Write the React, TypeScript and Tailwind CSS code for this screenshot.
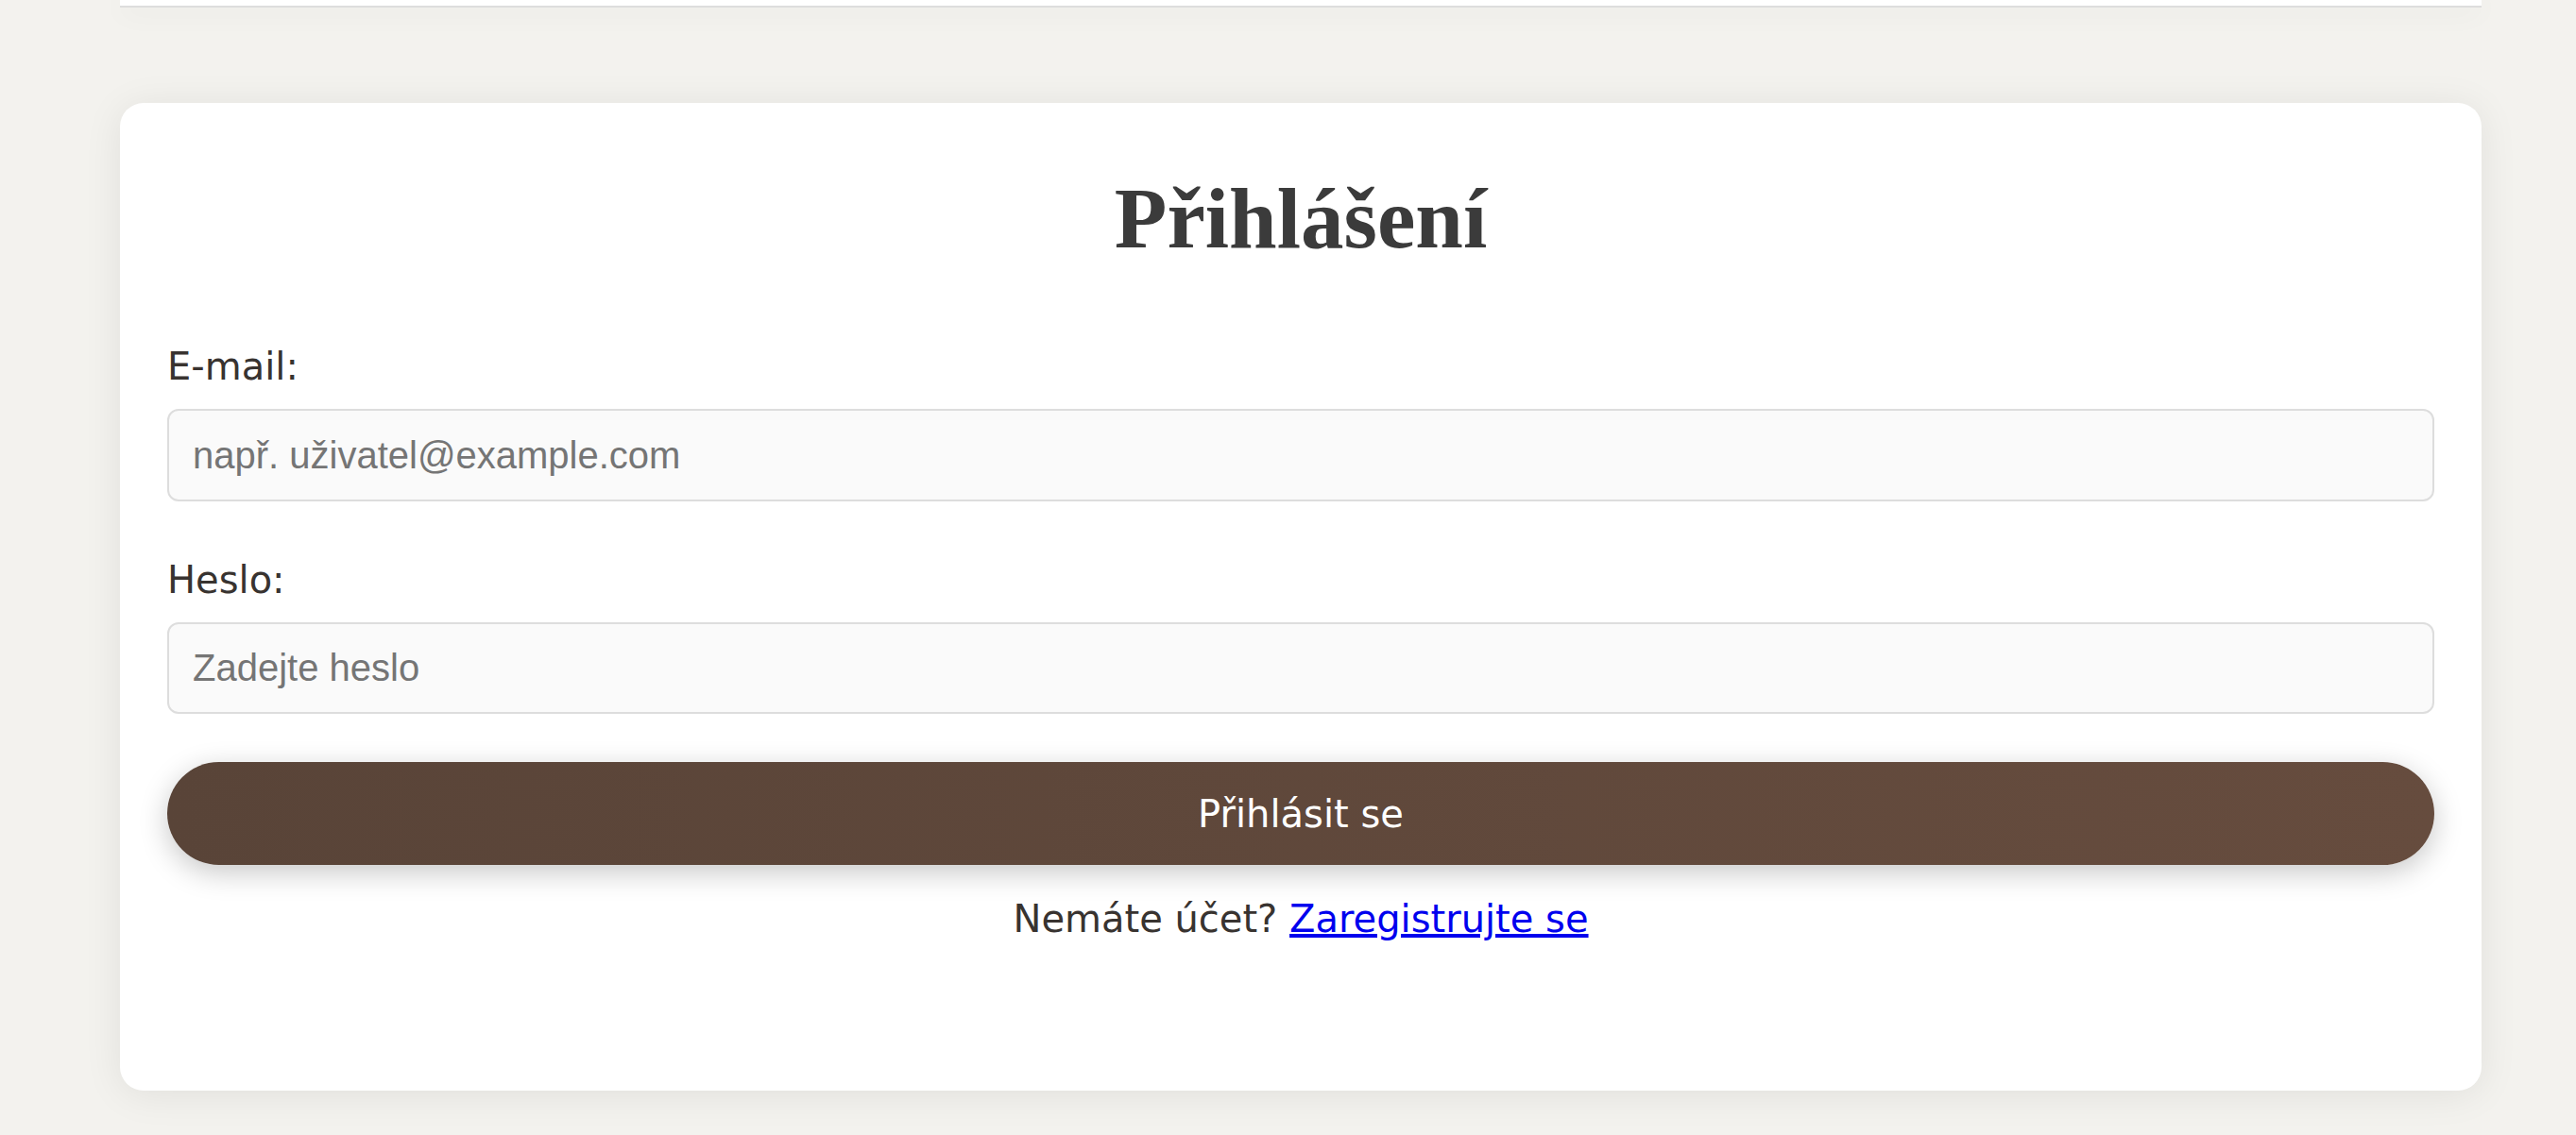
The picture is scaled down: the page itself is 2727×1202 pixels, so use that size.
import { useState } from "react";

const sans = "font-['DejaVu_Sans',sans-serif]";

export default function App() {
  const [email, setEmail] = useState("");
  const [password, setPassword] = useState("");

  return (
    <div className="min-h-screen bg-[#f3f2ee] pl-[127px] pr-[100px]">
      {/* bottom of the header card above */}
      <div className="h-[8px] w-[2500px] bg-white border-b-2 border-[#dddddd] shadow-[0_4px_30px_rgba(0,0,0,0.07)]" />

      <main className="mt-[101px] w-[2500px] rounded-[25px] bg-white px-[50px] pt-[77px] pb-[158px] shadow-[0_4px_40px_rgba(0,0,0,0.08)]">
        <h2 className="text-center font-['Liberation_Serif',serif] text-[91px] font-bold leading-none text-[#3b3b3b]">
          Přihlášení
        </h2>

        <form className="mt-[87px]" onSubmit={(e) => e.preventDefault()}>
          <div className="mb-[59px]">
            <label
              htmlFor="email"
              className={`block ${sans} mb-[21px] text-[40px] leading-[48px] text-[#383330]`}
            >
              E-mail:
            </label>
            <input
              id="email"
              type="email"
              value={email}
              onChange={(e) => setEmail(e.target.value)}
              placeholder="např. uživatel@example.com"
              className="block h-[98px] w-full rounded-[12px] border-2 border-[#dddddd] bg-[#fafafa] pl-[25px] font-['Liberation_Sans',Arial,sans-serif] text-[40px] text-[#333333] outline-none placeholder:text-[#757575]"
            />
          </div>

          <div className="mb-[51px]">
            <label
              htmlFor="password"
              className={`block ${sans} mb-[21px] text-[40px] leading-[48px] text-[#383330]`}
            >
              Heslo:
            </label>
            <input
              id="password"
              type="password"
              value={password}
              onChange={(e) => setPassword(e.target.value)}
              placeholder="Zadejte heslo"
              className="block h-[97px] w-full rounded-[12px] border-2 border-[#dddddd] bg-[#fafafa] pl-[25px] font-['Liberation_Sans',Arial,sans-serif] text-[40px] text-[#333333] outline-none placeholder:text-[#757575]"
            />
          </div>

          <button
            type="submit"
            className={`block h-[109px] w-full rounded-full bg-gradient-to-r from-[#594438] to-[#664c3e] ${sans} text-[40px] text-white shadow-[0_8px_30px_rgba(0,0,0,0.22)]`}
          >
            Přihlásit se
          </button>
        </form>

        <p className={`mt-[33px] text-center ${sans} text-[40px] leading-[48px] text-[#383330]`}>
          Nemáte účet?{" "}
          <a href="#" className="text-[#0000ee] underline">
            Zaregistrujte se
          </a>
        </p>
      </main>
    </div>
  );
}
